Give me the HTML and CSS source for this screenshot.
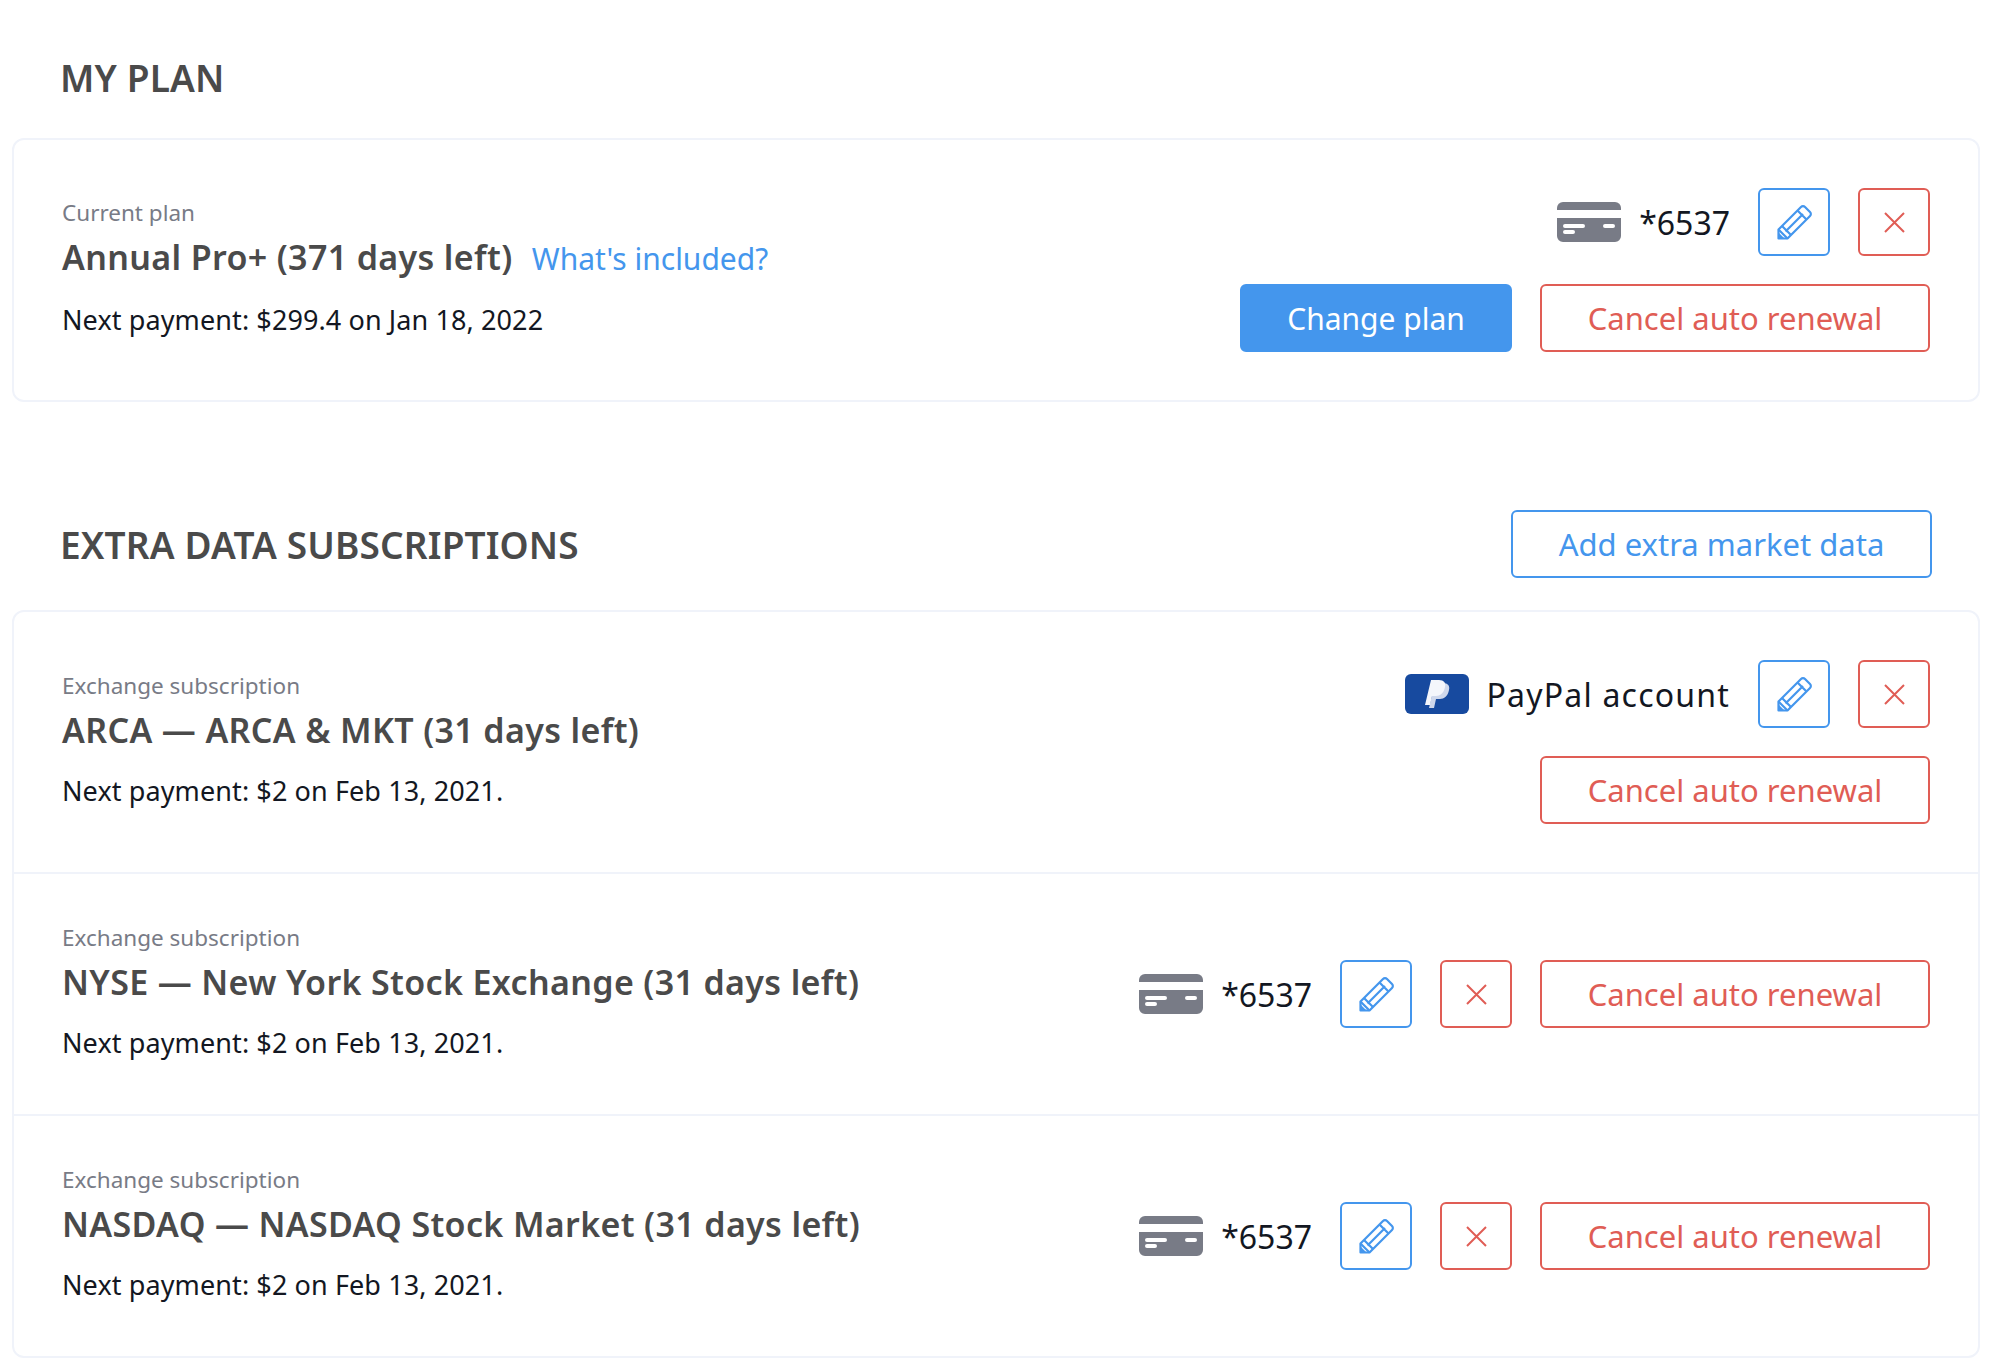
FILE: index.html
```html
<!DOCTYPE html>
<html lang="en">
<head>
    <meta charset="UTF-8">
    <title>My plan</title>
    <link rel="stylesheet" href="styles.css">
</head>
<body>
    <svg class="sprite" width="0" height="0">
        <symbol id="card" viewBox="0 0 64 40">
            <path d="M0 8V6a6 6 0 0 1 6-6h52a6 6 0 0 1 6 6v2z" fill="#787b86"/>
            <path fill-rule="evenodd" d="M0 16h64v18a6 6 0 0 1-6 6H6a6 6 0 0 1-6-6zM8 22a2 2 0 0 0 0 4h18a2 2 0 0 0 0-4zM8 28a2 2 0 0 0 0 4h8a2 2 0 0 0 0-4zM48 22a2 2 0 0 0 0 4h8a2 2 0 0 0 0-4z" fill="#787b86"/>
        </symbol>
        <symbol id="pencil" viewBox="0 0 35 35">
            <g fill="none" stroke="#4496ed" stroke-width="2.2" stroke-linejoin="round">
                <path d="M1.500 33.500V24.500L24 2a2.800 2.800 0 0 1 4 0l5 5a2.800 2.800 0 0 1 0 4L10.500 33.500z"/>
                <path d="M1.500 24.500l9 9M5 21l9 9M8.500 26.500L26 9M20.500 5.500l9 9"/>
            </g>
            <path d="M1 34V27l7 7z" fill="#4496ed"/>
        </symbol>
        <symbol id="cross" viewBox="0 0 21 21">
            <path d="M1 1l19 19M20 1L1 20" fill="none" stroke="#e05d55" stroke-width="2"/>
        </symbol>
        <symbol id="paypal" viewBox="0 0 64 40">
            <rect width="64" height="40" rx="6" fill="#174a9f"/>
            <path d="M30 9h8c5 0 7 3 6 7-1 6-5 9-9 9h-4l-2 9H24z" fill="#cfd8ec"/>
            <path d="M26 6h8c5 0 7 3 6 7-1 6-5 9-9 9h-4l-2 9H20z" fill="#f4f6fb"/>
        </symbol>
    </svg>

    <section class="section-head">
        <h2>MY PLAN</h2>
    </section>
    <div class="card">
        <div class="row row-tall">
            <div class="info">
                <div class="kind">Current plan</div>
                <div class="name">Annual Pro+ (371 days left) <a href="#" class="included">What's included?</a></div>
                <div class="next">Next payment: $299.4 on Jan 18, 2022</div>
            </div>
            <div class="actions">
                <div class="line">
                    <svg class="pay-icon"><use href="#card"/></svg>
                    <span class="pay-text">*6537</span>
                    <button class="btn-icon edit"><svg class="pencil"><use href="#pencil"/></svg></button>
                    <button class="btn-icon del"><svg class="cross"><use href="#cross"/></svg></button>
                </div>
                <div class="line">
                    <button class="btn primary">Change plan</button>
                    <button class="btn cancel">Cancel auto renewal</button>
                </div>
            </div>
        </div>
    </div>

    <section class="section-head extra">
        <h2>EXTRA DATA SUBSCRIPTIONS</h2>
        <button class="btn outline">Add extra market data</button>
    </section>
    <div class="card">
        <div class="row row-tall">
            <div class="info">
                <div class="kind">Exchange subscription</div>
                <div class="name">ARCA — ARCA &amp; MKT (31 days left)</div>
                <div class="next">Next payment: $2 on Feb 13, 2021.</div>
            </div>
            <div class="actions">
                <div class="line">
                    <svg class="pay-icon"><use href="#paypal"/></svg>
                    <span class="pay-text pay-name">PayPal account</span>
                    <button class="btn-icon edit"><svg class="pencil"><use href="#pencil"/></svg></button>
                    <button class="btn-icon del"><svg class="cross"><use href="#cross"/></svg></button>
                </div>
                <div class="line">
                    <button class="btn cancel">Cancel auto renewal</button>
                </div>
            </div>
        </div>
        <div class="row">
            <div class="info">
                <div class="kind">Exchange subscription</div>
                <div class="name">NYSE — New York Stock Exchange (31 days left)</div>
                <div class="next">Next payment: $2 on Feb 13, 2021.</div>
            </div>
            <div class="actions">
                <div class="line">
                    <svg class="pay-icon"><use href="#card"/></svg>
                    <span class="pay-text">*6537</span>
                    <button class="btn-icon edit"><svg class="pencil"><use href="#pencil"/></svg></button>
                    <button class="btn-icon del"><svg class="cross"><use href="#cross"/></svg></button>
                    <button class="btn cancel">Cancel auto renewal</button>
                </div>
            </div>
        </div>
        <div class="row">
            <div class="info">
                <div class="kind">Exchange subscription</div>
                <div class="name">NASDAQ — NASDAQ Stock Market (31 days left)</div>
                <div class="next">Next payment: $2 on Feb 13, 2021.</div>
            </div>
            <div class="actions">
                <div class="line">
                    <svg class="pay-icon"><use href="#card"/></svg>
                    <span class="pay-text">*6537</span>
                    <button class="btn-icon edit"><svg class="pencil"><use href="#pencil"/></svg></button>
                    <button class="btn-icon del"><svg class="cross"><use href="#cross"/></svg></button>
                    <button class="btn cancel">Cancel auto renewal</button>
                </div>
            </div>
        </div>
    </div>
</body>
</html>
```
FILE: styles.css
```css
* {
    box-sizing: border-box;
    margin: 0;
    padding: 0;
}

body {
    font-family: 'Noto Sans', sans-serif;
    background: white;
    color: #131722;
    padding: 0 14px 0 12px;
}

.sprite {
    position: absolute;
}

.section-head {
    display: flex;
    align-items: center;
    justify-content: space-between;
    height: 138px;
    padding: 17px 46px 0 48px;
}

.section-head.extra {
    height: 208px;
    padding: 108px 48px 32px 48px;
}

h2 {
    font-size: 37px;
    font-weight: 600;
    letter-spacing: 0.15px;
    color: #4a4a4a;
}

.card {
    border: 2px solid #f0f3fa;
    border-radius: 12px;
}

.row {
    display: flex;
    align-items: center;
    justify-content: space-between;
    height: 242px;
    padding: 0 48px;
    border-top: 2px solid #f0f3fa;
}

.row:first-child {
    border-top: none;
}

.row-tall {
    height: 260px;
}

.info {
    padding-bottom: 6px;
}

.kind {
    font-size: 22.5px;
    line-height: 32px;
    color: #787b86;
}

.name {
    font-size: 34px;
    font-weight: 600;
    letter-spacing: 0.35px;
    line-height: 42px;
    margin-top: 7px;
    color: #4a4a4a;
}

.included {
    margin-left: 10px;
    font-size: 30px;
    font-weight: 400;
    letter-spacing: 0;
    color: #4496ed;
    text-decoration: none;
}

.next {
    font-size: 27px;
    letter-spacing: 0.1px;
    line-height: 36px;
    margin-top: 22px;
}

.actions {
    display: flex;
    flex-direction: column;
    align-items: flex-end;
    gap: 28px;
}

.line {
    display: flex;
    align-items: center;
}

.pay-icon {
    width: 64px;
    height: 40px;
    margin-right: 18px;
}

.pay-text {
    font-size: 32px;
    margin-right: 28px;
}

.pay-name {
    letter-spacing: 1.2px;
}

button {
    font-family: inherit;
    background: white;
    border-radius: 6px;
    cursor: pointer;
}

.btn-icon {
    display: flex;
    align-items: center;
    justify-content: center;
    width: 72px;
    height: 68px;
    border: 2px solid;
}

.edit {
    border-color: #4496ed;
}

.del {
    margin-left: 28px;
    border-color: #e05d55;
}

.del + .cancel {
    margin-left: 28px;
}

.pencil {
    width: 35px;
    height: 35px;
}

.cross {
    width: 21px;
    height: 21px;
}

.btn {
    height: 68px;
    font-size: 31px;
    border: 2px solid;
}

.cancel {
    width: 390px;
    color: #e05d55;
    border-color: #e05d55;
}

.primary {
    width: 272px;
    margin-right: 28px;
    font-size: 30px;
    color: white;
    background: #4496ed;
    border-color: #4496ed;
}

.outline {
    width: 421px;
    color: #4496ed;
    border-color: #4496ed;
}
```
